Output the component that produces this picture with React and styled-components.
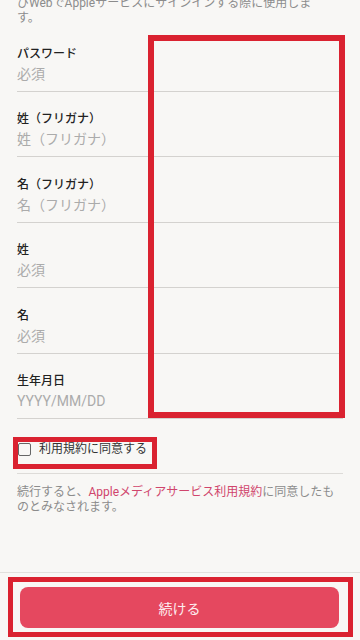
import React, {useState} from 'react';
import styled, {createGlobalStyle} from 'styled-components';

const GlobalStyle = createGlobalStyle`
    html, body {
        margin: 0;
        padding: 0;
        background: #f8f7f5;
    }
    body {
        font-family: Roboto, "Noto Sans CJK JP", sans-serif;
    }
`;

const fields = [
    {label: 'パスワード', placeholder: '必須'},
    {label: '姓（フリガナ）', placeholder: '姓（フリガナ）'},
    {label: '名（フリガナ）', placeholder: '名（フリガナ）'},
    {label: '姓', placeholder: '必須'},
    {label: '名', placeholder: '必須'},
    {label: '生年月日', placeholder: 'YYYY/MM/DD'},
];

const Page = styled.div`
    position: relative;
    width: 360px;
    height: 640px;
    overflow: hidden;
    display: flex;
    flex-direction: column;
    background: #f8f7f5;
`;

const Content = styled.div`
    flex: 1;
    padding: 0 17px;
`;

const Intro = styled.p`
    margin: -4px 0 0;
    max-width: 302px;
    font-size: 12px;
    line-height: 15px;
    color: #8c8c8c;
`;

const Field = styled.div`
    display: flex;
    flex-direction: column;
    gap: 2px;
    padding: 19.5px 0 7px;
    border-bottom: 1px solid #d4d2cf;
`;

const Label = styled.div`
    font-size: 12px;
    line-height: 16px;
    font-weight: 500;
    color: #222;
`;

const Placeholder = styled.div`
    font-size: 14px;
    line-height: 20px;
    color: #ababab;
`;

const AgreeRow = styled.label`
    display: flex;
    align-items: center;
    gap: 8px;
    padding: 22px 0 16px 1px;
    border-bottom: 1px solid #dddbd8;
    cursor: pointer;
`;

const Box = styled.span`
    width: 11px;
    height: 11px;
    border: 1.5px solid #666;
    border-radius: 2px;
    background: ${props => props.checked ? '#e5485f' : 'transparent'};
`;

const AgreeText = styled.span`
    font-size: 12px;
    line-height: 16px;
    color: #333;
`;

const Terms = styled.p`
    margin: 11px 0 0;
    font-size: 12px;
    line-height: 15px;
    color: #8c8c8c;

    a {
        color: #d0456c;
        text-decoration: none;
    }
`;

const BottomBar = styled.div`
    border-top: 1px solid #e2e0dd;
    padding: 14px 21px 12px 20px;
`;

const ContinueButton = styled.button`
    display: block;
    width: 100%;
    height: 41px;
    border: none;
    border-radius: 8px;
    background: #e5485f;
    color: #fdeef0;
    font-family: inherit;
    font-size: 14px;
`;

const Marker = styled.div`
    position: absolute;
    box-sizing: border-box;
    border: ${props => props.weight}px solid #da2230;
    pointer-events: none;
`;

const App = () => {
    const [agreed, setAgreed] = useState(false);
    return (
        <Page>
            <GlobalStyle />
            <Content>
                <Intro>びWebでAppleサービスにサインインする際に使用します。</Intro>
                {fields.map((field, index) => (
                    <Field key={index}>
                        <Label>{field.label}</Label>
                        <Placeholder>{field.placeholder}</Placeholder>
                    </Field>
                ))}
                <AgreeRow onClick={() => setAgreed(!agreed)}>
                    <Box checked={agreed} />
                    <AgreeText>利用規約に同意する</AgreeText>
                </AgreeRow>
                <Terms>
                    続行すると、<a href="#">Appleメディアサービス利用規約</a>に同意したものとみなされます。
                </Terms>
            </Content>
            <BottomBar>
                <ContinueButton>続ける</ContinueButton>
            </BottomBar>
            <Marker weight={6} style={{left: 148, top: 35, width: 197, height: 383}} />
            <Marker weight={5} style={{left: 13, top: 437, width: 144, height: 32}} />
            <Marker weight={5} style={{left: 8, top: 577, width: 345, height: 60}} />
        </Page>
    );
};

export default App;
